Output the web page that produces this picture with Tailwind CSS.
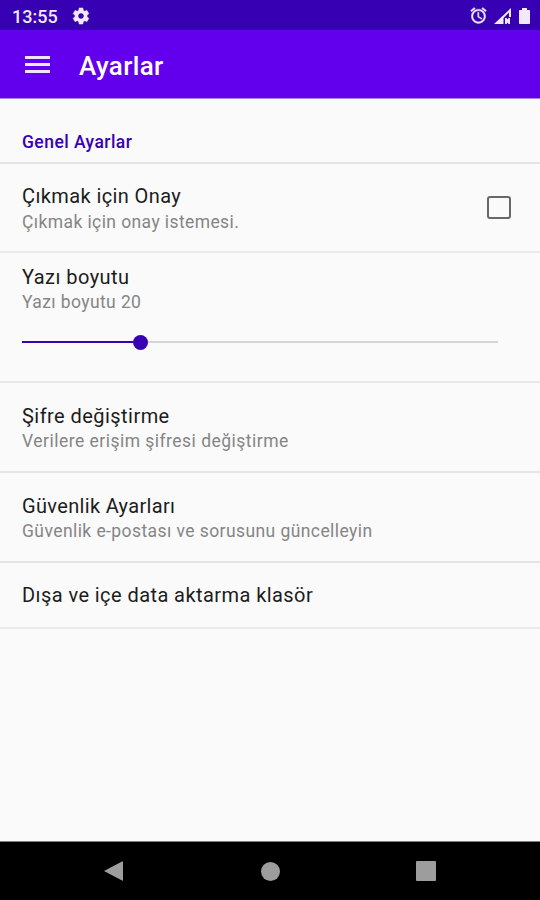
<!DOCTYPE html>
<html lang="tr">
<head>
<meta charset="utf-8">
<title>Ayarlar</title>
<script src="https://cdn.jsdelivr.net/npm/@tailwindcss/browser@4"></script>
</head>
<body class="w-[540px] h-[900px] overflow-hidden bg-[#fafafa] flex flex-col font-['Roboto',sans-serif]">
  <div class="h-[30px] shrink-0 bg-[#3700b3] text-[#f0eafc] flex items-center pl-3 pr-2">
    <span class="w-[46px] text-[18px] font-medium leading-[30px] pt-[3px]">13:55</span>
    <svg class="ml-[13px] w-5 h-5 mt-[1px]" viewBox="0 0 24 24" fill="currentColor" stroke="currentColor" stroke-width="0.6"><path d="M19.14 12.94c.04-.3.06-.61.06-.94 0-.32-.02-.64-.07-.94l2.03-1.58c.18-.14.23-.41.12-.61l-1.92-3.32c-.12-.22-.37-.29-.59-.22l-2.39.96c-.5-.38-1.03-.7-1.62-.94l-.36-2.54c-.04-.24-.24-.41-.48-.41h-3.84c-.24 0-.43.17-.47.41l-.36 2.54c-.59.24-1.13.57-1.62.94l-2.39-.96c-.22-.08-.47 0-.59.22L2.74 8.87c-.12.21-.08.47.12.61l2.03 1.58c-.05.3-.09.63-.09.94s.02.64.07.94l-2.03 1.58c-.18.14-.23.41-.12.61l1.92 3.32c.12.22.37.29.59.22l2.39-.96c.5.38 1.03.7 1.62.94l.36 2.54c.05.24.24.41.48.41h3.84c.24 0 .44-.17.47-.41l.36-2.54c.59-.24 1.13-.56 1.62-.94l2.39.96c.22.08.47 0 .59-.22l1.92-3.32c.12-.22.07-.47-.12-.61l-2.01-1.58zM12 15.6c-1.98 0-3.6-1.62-3.6-3.6s1.62-3.6 3.6-3.6 3.6 1.62 3.6 3.6-1.62 3.6-3.6 3.6z"/></svg>
    <div class="ml-auto flex items-center">
      <svg class="w-[19px] h-[19px] mr-[6px]" viewBox="0 0 24 24" fill="currentColor" stroke="currentColor" stroke-width="0.5"><path d="M22 5.72l-4.6-3.86-1.29 1.53 4.6 3.86L22 5.72zM7.88 3.39L6.6 1.86 2 5.71l1.29 1.53 4.59-3.85zM12.5 8H11v6l4.75 2.85.75-1.23-4-2.37V8zM12 4c-4.970 0-9 4.030-9 9s4.020 9 9 9c4.970 0 9-4.030 9-9s-4.030-9-9-9zm0 16c-3.870 0-7-3.130-7-7s3.130-7 7-7 7 3.130 7 7-3.130 7-7 7z"/></svg>
      <svg class="w-[17px] h-4 mr-[7px] mt-px" viewBox="0 0 17 16" fill="currentColor"><path fill-rule="evenodd" d="M0 16L17 0V9H15V4.500L9.500 10V16z"/><path d="M11 10h1.500l1 1.500 1-1.500H16v6h-1.500l-1-1.500-1 1.500H11z"/></svg>
      <svg class="w-[13px] h-4 mr-[1px] mt-px" viewBox="0 0 13 16" fill="currentColor"><path d="M4 0h5v2h2.500L12 2.500V15.500L11.500 16h-10L1 15.500V2.500L1.500 2H4z"/></svg>
    </div>
  </div>
  <header class="h-[69px] shrink-0 bg-[#6200ee] border-b border-[#a982ef] text-white flex items-center pl-[25px]">
    <div class="w-[25px] flex flex-col gap-[4px] mt-[1px]">
      <i class="h-[3px] bg-[#eee5fd]"></i><i class="h-[3px] bg-[#eee5fd]"></i><i class="h-[3px] bg-[#eee5fd]"></i>
    </div>
    <h1 class="ml-[29px] text-[26px] font-medium leading-[30px] mt-[3px] tracking-[0.35px]">Ayarlar</h1>
  </header>
  <main class="flex-1 text-[20px] leading-6 text-[#1c1c1c]">
    <h2 class="h-[65px] border-b-2 border-[#e4e4e4] pl-[22px] pt-[31px] text-[17.500px] font-medium text-[#3700b3] tracking-[0.45px]">Genel Ayarlar</h2>
    <section class="h-[89px] border-b-2 border-[#e9e9e9] pl-[22px] pt-[20px] pr-[29px] flex justify-between">
      <div>
        <p class="tracking-[0.4px]">Çıkmak için Onay</p>
        <p class="text-[17.500px] text-[#858585] tracking-[0.4px] mt-[2px]">Çıkmak için onay istemesi.</p>
      </div>
      <div class="w-6 h-[23px] mt-[12px] border-2 border-[#686868] rounded-[3px]"></div>
    </section>
    <section class="h-[130px] border-b-2 border-[#e9e9e9] pl-[22px] pt-[12px]">
      <p class="tracking-[0.45px]">Yazı boyutu</p>
      <p class="text-[17.500px] text-[#858585] tracking-[0.4px] mt-[1px]">Yazı boyutu 20</p>
      <div class="mt-[20px] w-[476px] h-[16px] flex items-center">
        <div class="w-[111px] h-[2px] bg-[#3700b3]"></div>
        <div class="w-[15px] h-[15px] rounded-full bg-[#3700b3]"></div>
        <div class="flex-1 h-[2px] bg-[#d6d6d6]"></div>
      </div>
    </section>
    <section class="h-[90px] border-b-2 border-[#e4e4e4] pl-[22px] pt-[21px]">
      <p class="tracking-[0.45px]">Şifre değiştirme</p>
      <p class="text-[17.500px] text-[#858585] tracking-[0.48px] mt-[1px]">Verilere erişim şifresi değiştirme</p>
    </section>
    <section class="h-[90px] border-b-2 border-[#e4e4e4] pl-[22px] pt-[21px]">
      <p class="tracking-[0.33px]">Güvenlik Ayarları</p>
      <p class="text-[17.500px] text-[#858585] tracking-[0.42px] mt-[1px]">Güvenlik e-postası ve sorusunu güncelleyin</p>
    </section>
    <section class="h-[66px] border-b-2 border-[#e9e9e9] pl-[22px] pt-[20px]">
      <p class="tracking-[0.43px]">Dışa ve içe data aktarma klasör</p>
    </section>
  </main>
  <nav class="h-[59px] shrink-0 bg-black border-t border-[#808080] flex items-center pl-[104px] text-[#9d9d9d]">
    <svg class="w-[19px] h-5" viewBox="0 0 19 20" fill="currentColor"><path d="M0 10L18 0.500Q19 0 19 1V19Q19 20 18 19.500z"/></svg>
    <div class="ml-[138px] w-[19px] h-[19px] rounded-full bg-current"></div>
    <div class="ml-[136px] w-5 h-5 rounded-[1px] bg-current"></div>
  </nav>
</body>
</html>
